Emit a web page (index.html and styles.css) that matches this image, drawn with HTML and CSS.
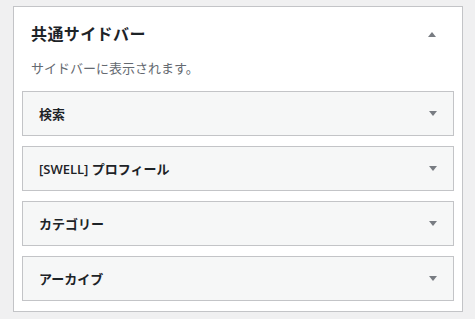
FILE: index.html
```html
<!DOCTYPE html>
<html lang="ja">
<head>
<meta charset="utf-8">
<link rel="stylesheet" href="styles.css">
</head>
<body>
<div class="panel">
  <div class="panel-head">
    <h2 class="panel-title">共通サイドバー</h2>
    <span class="arrow arrow-up"></span>
  </div>
  <p class="panel-desc">サイドバーに表示されます。</p>
  <div class="widgets">
    <div class="widget"><span class="widget-title">検索</span><span class="arrow arrow-down"></span></div>
    <div class="widget"><span class="widget-title">[SWELL] プロフィール</span><span class="arrow arrow-down"></span></div>
    <div class="widget"><span class="widget-title">カテゴリー</span><span class="arrow arrow-down"></span></div>
    <div class="widget"><span class="widget-title">アーカイブ</span><span class="arrow arrow-down"></span></div>
  </div>
</div>
</body>
</html>
```

FILE: styles.css
```css
html, body {
  margin: 0;
  padding: 0;
  background: #f0f0f1;
  font-family: "Noto Sans", "Noto Sans CJK JP", sans-serif;
  color: #1d2327;
}
.panel {
  margin: 6px 0 0 13px;
  width: 450px;
  height: 306px;
  box-sizing: border-box;
  background: #fff;
  border: 1px solid #c3c4c7;
  padding: 15px 8px 10px 8px;
}
.panel-head {
  display: flex;
  align-items: center;
  justify-content: space-between;
  height: 24px;
  padding: 0 18px 0 9px;
}
.panel-title {
  margin: 0;
  font-size: 16px;
  line-height: 24px;
  font-weight: 700;
  letter-spacing: 0.4px;
}
.panel-desc {
  margin: 12px 0 13px 9px;
  font-size: 13px;
  line-height: 20px;
  color: #646970;
}
.widgets {
  display: flex;
  flex-direction: column;
  gap: 10px;
}
.widget {
  height: 45px;
  box-sizing: border-box;
  border: 1px solid #c3c4c7;
  background: #f6f7f7;
  display: flex;
  align-items: center;
  justify-content: space-between;
  padding: 0 16px 0 16px;
}
.widget-title {
  font-family: "Open Sans", "Noto Sans CJK JP", sans-serif;
  font-size: 13px;
  font-weight: 600;
  color: #1d2327;
}
.arrow {
  width: 0;
  height: 0;
  border-left: 4px solid transparent;
  border-right: 4px solid transparent;
}
.arrow-up {
  border-bottom: 5px solid #787c82;
}
.arrow-down {
  border-top: 5px solid #787c82;
}
```
